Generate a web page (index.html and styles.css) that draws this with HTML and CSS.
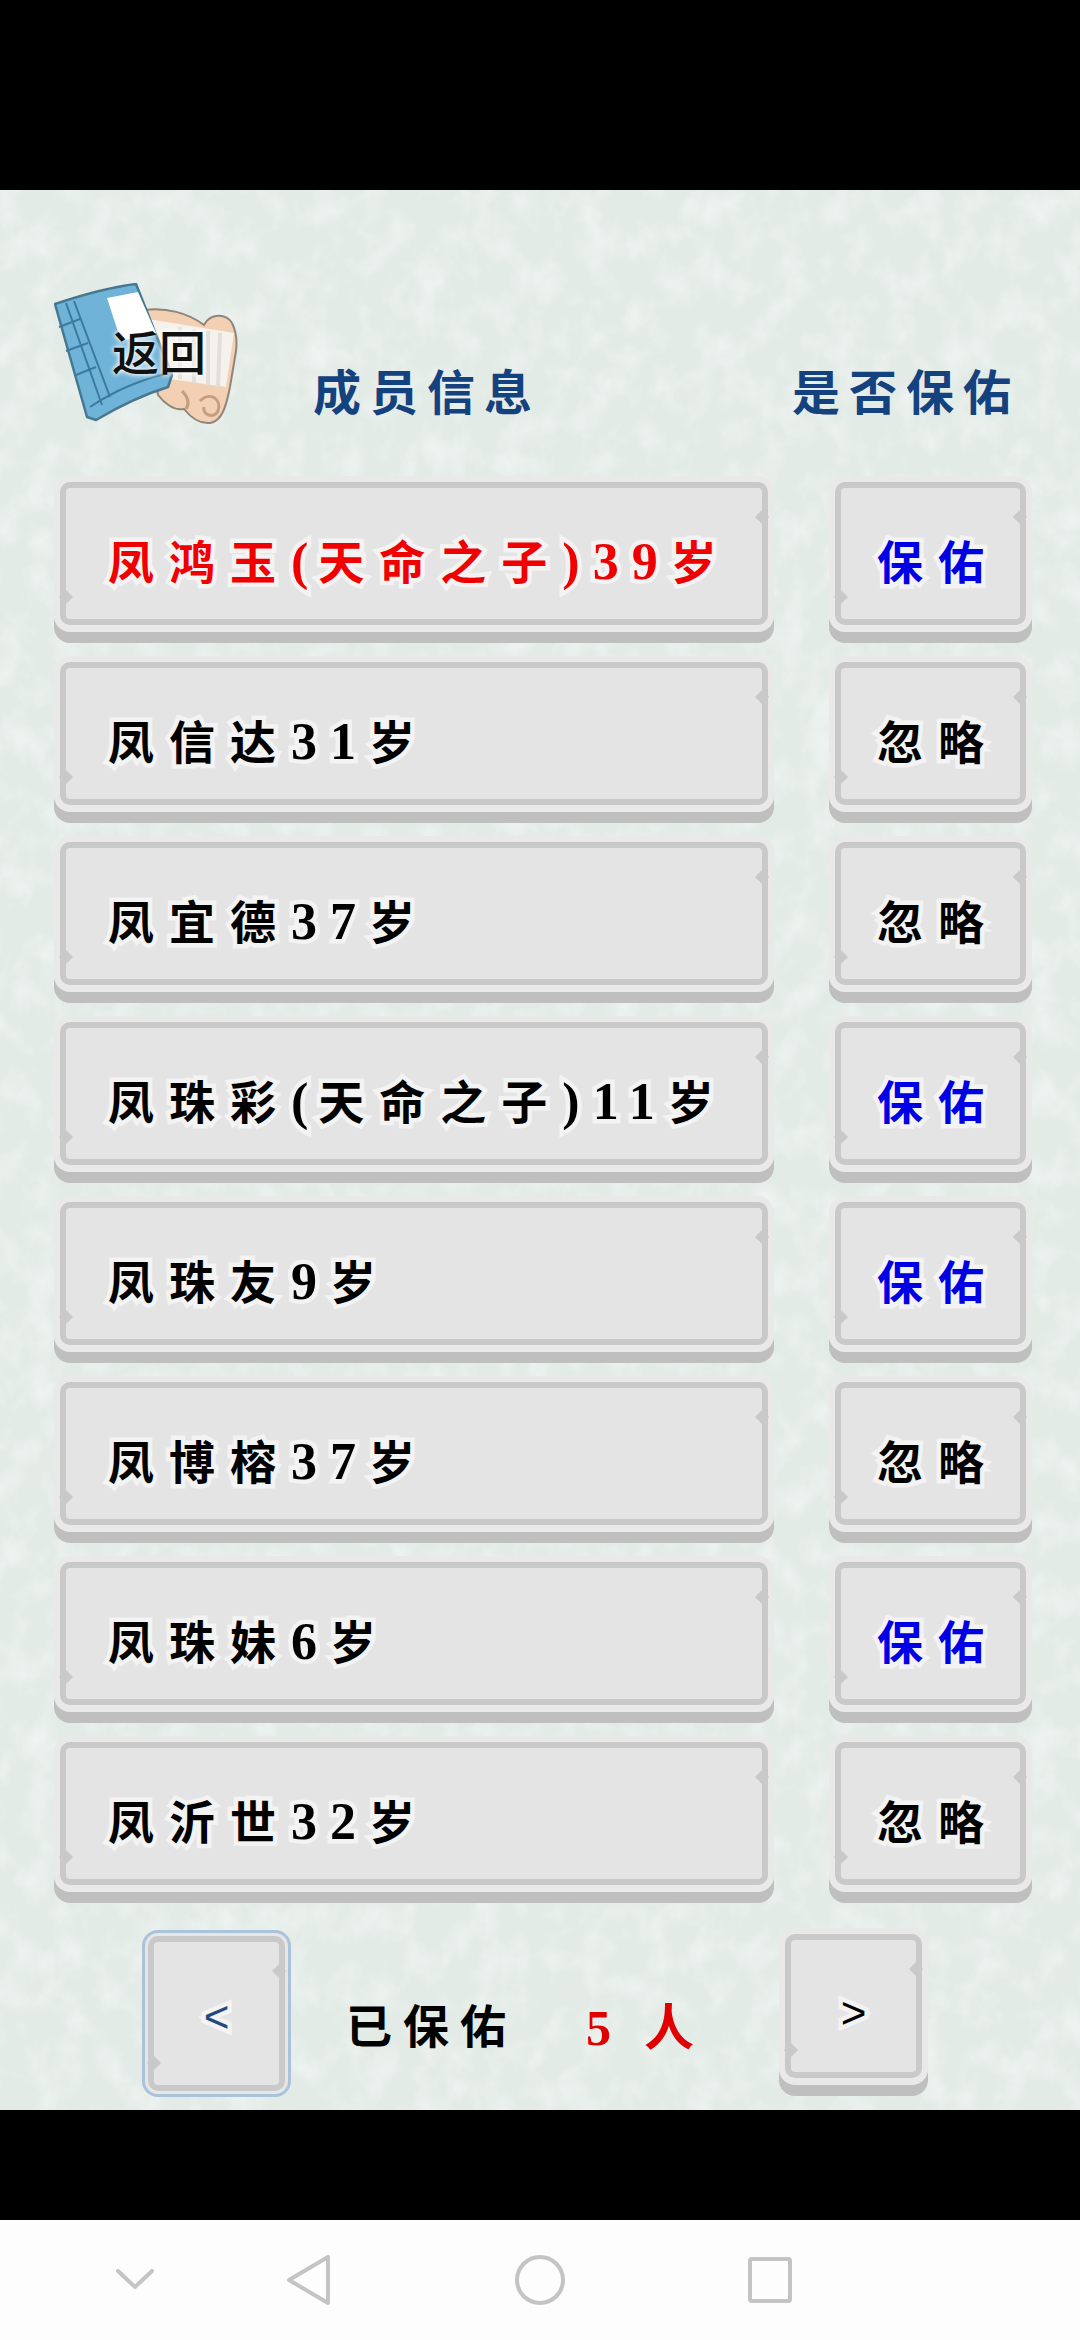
FILE: index.html
```html
<!DOCTYPE html>
<html lang="zh-CN">

<head>
    <meta charset="UTF-8">
    <meta name="viewport" content="width=device-width, initial-scale=1.0">
    <title>成员信息</title>
    <link rel="stylesheet" href="styles.css">
</head>

<body>
    <div class="status-bar"></div>

    <div class="game">
        <!-- paper texture -->
        <svg class="paper" width="1080" height="1920">
            <filter id="mottle" x="0" y="0" width="100%" height="100%">
                <feTurbulence type="fractalNoise" baseFrequency="0.036 0.028" numOctaves="4" seed="11" />
                <feColorMatrix type="matrix" values="0 0 0 0 0.95  0 0 0 0 0.97  0 0 0 0 0.96  1.1 0 0 0 -0.47" />
            </filter>
            <filter id="speck" x="0" y="0" width="100%" height="100%">
                <feTurbulence type="fractalNoise" baseFrequency="0.009 0.013" numOctaves="3" seed="4" />
                <feColorMatrix type="matrix" values="0 0 0 0 0.78  0 0 0 0 0.83  0 0 0 0 0.8  0 1 0 0 -0.44" />
            </filter>
            <rect width="1080" height="1920" fill="#e3ebe7" />
            <rect width="1080" height="1920" filter="url(#speck)" />
            <rect width="1080" height="1920" filter="url(#mottle)" />
        </svg>

        <div class="header">
            <div class="back">
                <svg class="back-icon" width="184" height="142" viewBox="0 0 184 142">
                    <!-- scroll -->
                    <path d="M90 27 C112 24 134 30 150 42 C156 30 172 30 178 40 C183 50 183 60 182 68 L176 104 C172 124 168 138 156 140 C146 141 138 136 130 126 C120 128 110 120 104 112 L96 60 Z" fill="#f3cfb4" stroke="#8f8578" stroke-width="2" />
                    <path d="M94 36 L180 50 L172 104 L116 96 Z" fill="#f5f2ed" />
                    <path d="M126 44 L126 96 M140 46 L140 100 M154 48 L154 102 M166 50 L164 104" stroke="#e2dfda" stroke-width="4" fill="none" />
                    <path d="M146 118 C156 108 168 116 164 128 C160 136 148 132 150 124 M128 108 C134 114 136 120 132 126" stroke="#c59d80" stroke-width="3" fill="none" />
                    <!-- book -->
                    <path d="M1 21 C28 12 56 4 82 1 L118 92 L114 104 C88 112 64 124 42 137 L33 134 Z" fill="#6fb3d8" stroke="#47788f" stroke-width="2.5" stroke-linejoin="round" />
                    <path d="M53 15 L84 9 L102 50 L67 58 Z" fill="#fff" />
                    <path d="M12 20 L48 122 M20 18 L56 114 M5 44 L26 36 M12 68 L34 60 M22 92 L42 84 M36 124 C60 108 88 96 116 90" stroke="#3b7a9e" stroke-width="2" fill="none" />
                </svg>
                <span class="back-label">返回</span>
            </div>
            <span class="title title-info">成员信息</span>
            <span class="title title-bless">是否保佑</span>
        </div>

        <div class="list">
            <div class="row">
                <button class="key name destined">凤鸿玉<span class="latin paren">(</span>天命之子<span class="latin">)39</span>岁</button>
                <button class="key choice bless">保佑</button>
            </div>
            <div class="row">
                <button class="key name">凤信达<span class="latin">31</span>岁</button>
                <button class="key choice">忽略</button>
            </div>
            <div class="row">
                <button class="key name">凤宜德<span class="latin">37</span>岁</button>
                <button class="key choice">忽略</button>
            </div>
            <div class="row">
                <button class="key name">凤珠彩<span class="latin paren">(</span>天命之子<span class="latin">)11</span>岁</button>
                <button class="key choice bless">保佑</button>
            </div>
            <div class="row">
                <button class="key name">凤珠友<span class="latin">9</span>岁</button>
                <button class="key choice bless">保佑</button>
            </div>
            <div class="row">
                <button class="key name">凤博榕<span class="latin">37</span>岁</button>
                <button class="key choice">忽略</button>
            </div>
            <div class="row">
                <button class="key name">凤珠妹<span class="latin">6</span>岁</button>
                <button class="key choice bless">保佑</button>
            </div>
            <div class="row">
                <button class="key name">凤沂世<span class="latin">32</span>岁</button>
                <button class="key choice">忽略</button>
            </div>
        </div>

        <div class="pager">
            <button class="key page page-prev">&lt;</button>
            <span class="saved">已保佑</span>
            <span class="count">5<i class="count-unit">人</i></span>
            <button class="key page page-next">&gt;</button>
        </div>
    </div>

    <div class="letterbox"></div>

    <div class="nav-bar">
        <svg class="nav-icon nav-hide" width="38" height="20" viewBox="0 0 38 20">
            <path d="M2 2 L19 18 L36 2" />
        </svg>
        <svg class="nav-icon nav-back" width="44" height="50" viewBox="0 0 44 50">
            <path d="M41 2 L41 48 L2 25 Z" />
        </svg>
        <svg class="nav-icon nav-home" width="50" height="50" viewBox="0 0 50 50">
            <circle cx="25" cy="25" r="23" />
        </svg>
        <svg class="nav-icon nav-recent" width="44" height="46" viewBox="0 0 44 46">
            <rect x="2" y="2" width="40" height="42" rx="2" />
        </svg>
    </div>
</body>

</html>
```

FILE: styles.css
```css
* {
    box-sizing: border-box;
    margin: 0;
}

body {
    width: 1080px;
    height: 2340px;
    overflow: hidden;
    background-color: #000;
    font-family: "Liberation Serif", "Noto Sans CJK SC", serif;
}

.status-bar {
    height: 190px;
    background-color: #000;
}

.game {
    position: relative;
    height: 1920px;
    overflow: hidden;
}

.paper {
    position: absolute;
    top: 0;
    left: 0;
}

/* header */
.header {
    position: relative;
    display: flex;
    height: 287px;
    padding: 93px 0 0 54px;
}

.back {
    position: relative;
    width: 184px;
    height: 142px;
}

.back-icon {
    display: block;
}

.back-label {
    position: absolute;
    top: 37px;
    left: 58px;
    font-family: "Noto Sans CJK SC", sans-serif;
    font-size: 47px;
    font-weight: 500;
    line-height: 60px;
    color: #111;
    text-shadow: 0 0 4px #fff, 0 0 6px #fff;
}

.title {
    font-size: 48px;
    line-height: 60px;
    font-weight: 700;
    letter-spacing: 9px;
    color: #14427e;
}

.title-info {
    margin: 81px 0 0 75px;
}

.title-bless {
    margin: 81px 0 0 251px;
}

/* member rows */
.list {
    position: relative;
    display: flex;
    flex-direction: column;
    gap: 14px;
}

.row {
    display: flex;
    height: 166px;
    padding-left: 54px;
}

.key {
    position: relative;
    display: block;
    height: 143px;
    margin: 5px 6px 18px;
    padding: 20px 0 0;
    border: 6px solid #c9c9c9;
    border-radius: 10px;
    background-color: #e4e4e4;
    box-shadow:
        0 0 0 6px #e9e9e9,
        0 1px 0 6px #e9e9e9,
        0 12px 0 6px #bfbfbf;
    font-family: inherit;
    font-size: 46px;
    font-weight: 700;
    letter-spacing: 15px;
    line-height: 60px;
    color: #000;
    text-align: left;
    -webkit-text-stroke: 9px #f3f3f3;
    paint-order: stroke fill;
}

/* little nicks on the key edge */
.key::before,
.key::after {
    content: "";
    position: absolute;
    width: 10px;
    height: 10px;
    background-color: #c9c9c9;
    transform: rotate(45deg);
}

.key::before {
    top: 24px;
    right: -5px;
}

.key::after {
    bottom: 17px;
    left: -5px;
}

.latin {
    font-size: 52px;
    line-height: 46px;
    letter-spacing: 13px;
}

.paren {
    letter-spacing: 10px;
}

.name {
    width: 708px;
    padding-left: 42px;
}

.destined {
    color: #f00000;
}

.choice {
    width: 191px;
    margin-left: 61px;
    padding-left: 36px;
}

.bless {
    color: #0000e6;
}

/* pager */
.pager {
    position: relative;
    display: flex;
    align-items: flex-start;
    padding: 0 158px 0 148px;
}

.page {
    width: 137px;
    margin: 0;
    font-family: "Liberation Sans", sans-serif;
    font-weight: 400;
    font-size: 44px;
    letter-spacing: 0;
    text-align: center;
}

.page-prev {
    height: 155px;
    margin-top: 33px;
    padding: 6px 0 0;
    color: #24497a;
    box-shadow:
        0 0 0 3px #e6e6e6,
        0 0 0 6px #a9c3da;
}

.page-next {
    height: 144px;
    margin: 31px 0 0 auto;
    padding: 14px 0 0;
}

.saved,
.count {
    margin-top: 95px;
    font-size: 46px;
    line-height: 60px;
    font-weight: 700;
}

.saved {
    width: 240px;
    margin-left: 61px;
    letter-spacing: 11px;
}

.count {
    display: flex;
    gap: 33px;
    font-size: 50px;
    color: #e00000;
}

.count-unit {
    font-style: normal;
    font-size: 50px;
}

.letterbox {
    height: 110px;
    background-color: #000;
}

/* system navigation */
.nav-bar {
    position: relative;
    height: 120px;
    background-color: #fdfdfd;
}

.nav-icon {
    position: absolute;
    fill: none;
    stroke: #c4c4c4;
    stroke-width: 4px;
    stroke-linecap: round;
    stroke-linejoin: round;
}

.nav-hide {
    top: 49px;
    left: 116px;
}

.nav-back {
    top: 35px;
    left: 287px;
}

.nav-home {
    top: 35px;
    left: 515px;
}

.nav-recent {
    top: 37px;
    left: 748px;
}
```
